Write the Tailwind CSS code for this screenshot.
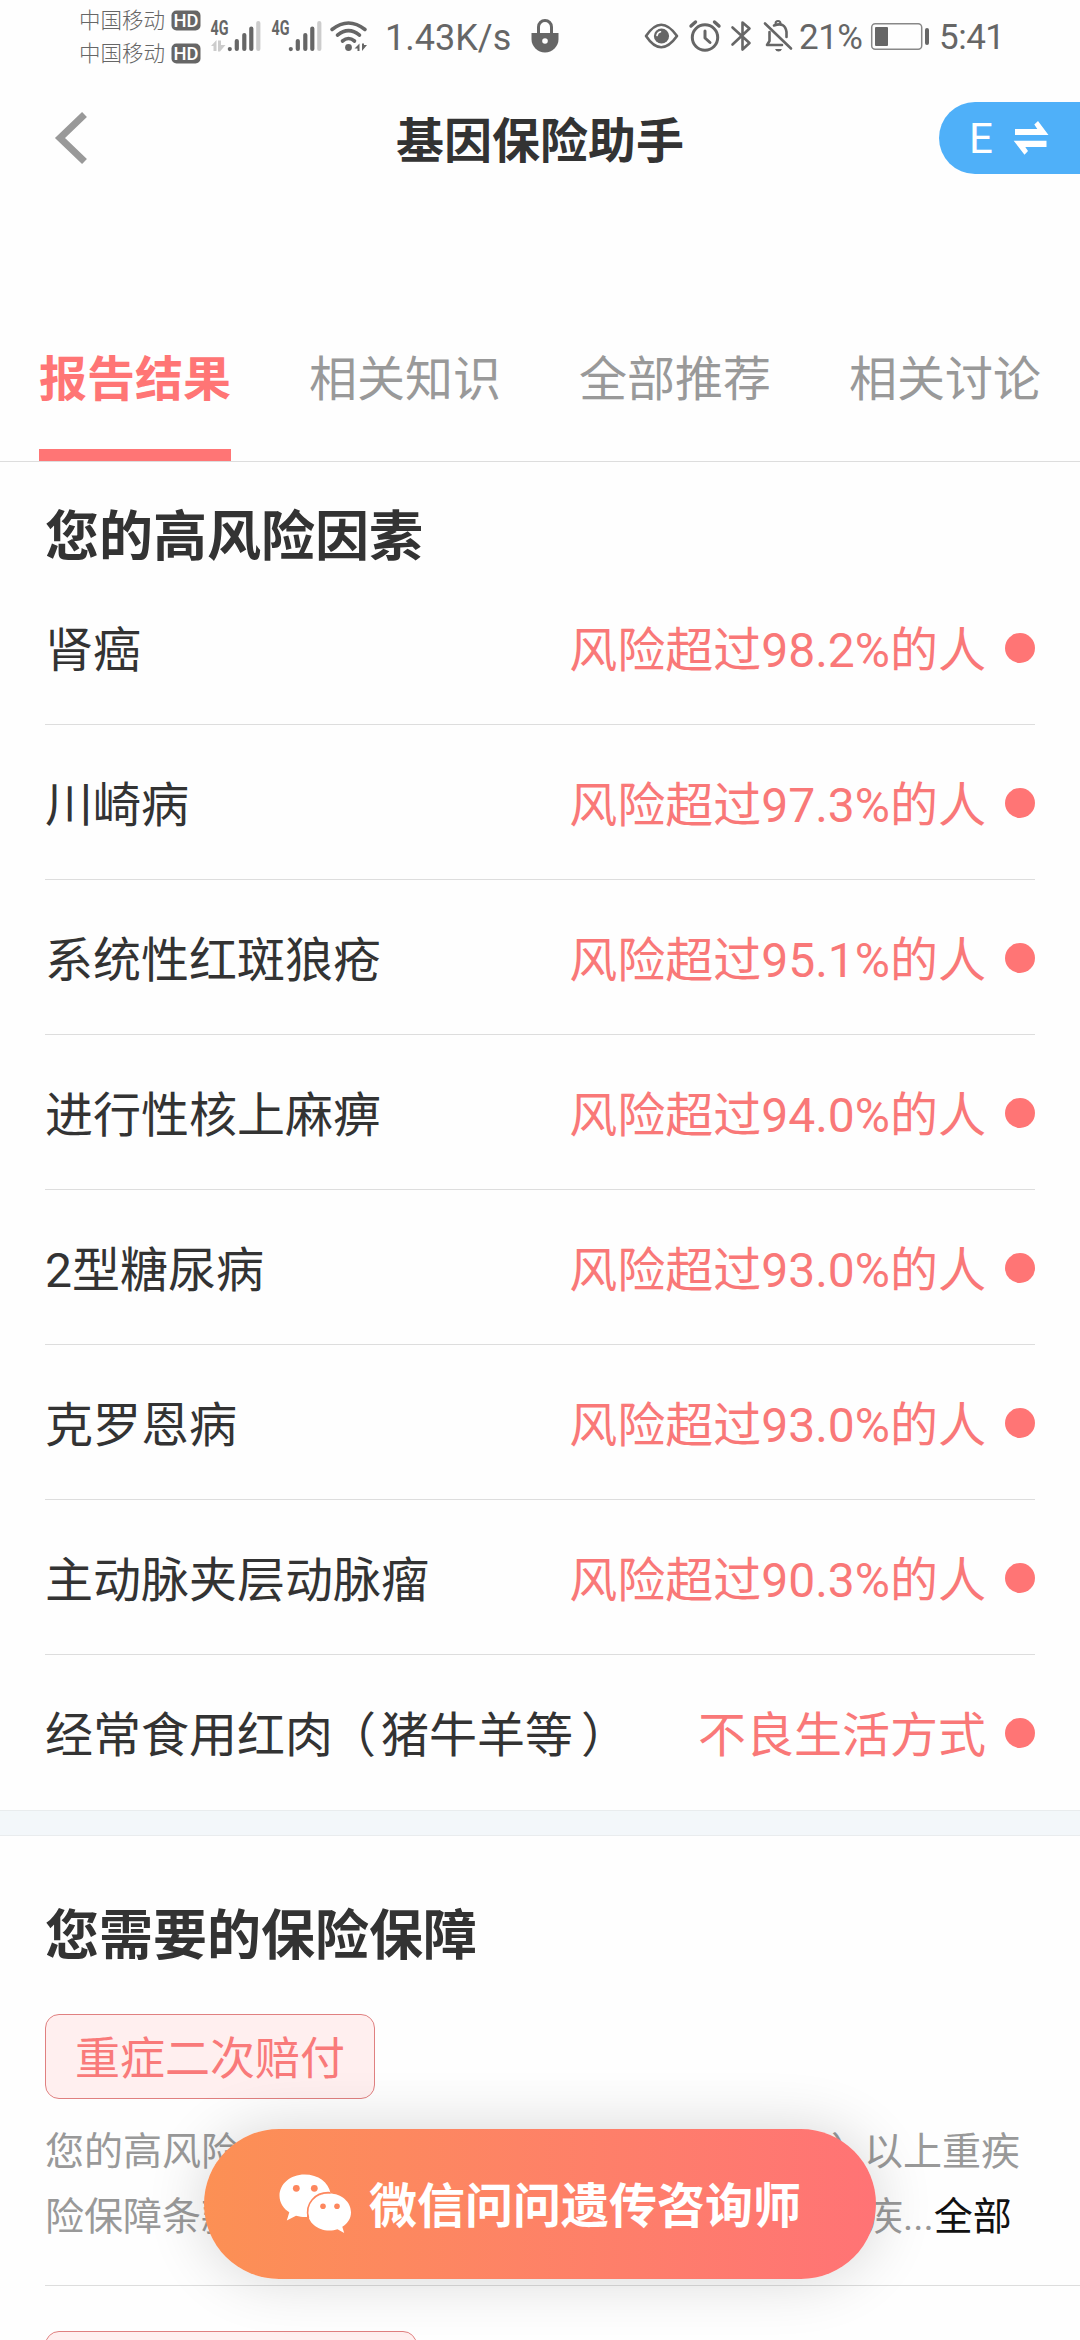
<!DOCTYPE html>
<html lang="zh-CN">
<head>
<meta charset="utf-8">
<title>基因保险助手</title>
<script src="https://cdn.jsdelivr.net/npm/@tailwindcss/browser@4"></script>
</head>
<body class="bg-[#fefefe] text-[#333] font-[Roboto,'Noto_Sans_CJK_SC',sans-serif] w-[1080px] h-[2340px] overflow-hidden">
<div class="relative w-[1080px] h-[2340px] overflow-hidden flex flex-col">

  <!-- status bar -->
  <div class="h-[72px] shrink-0 flex text-[#666] text-[36px] leading-[72px] pl-[79px] whitespace-nowrap">
    <div class="w-[92px] pt-[4px] text-[21.5px] leading-[33px] font-light">
      <div>中国移动</div><div>中国移动</div>
    </div>
    <svg class="w-[208px] h-[72px] shrink-0" viewBox="171 0 208 72" fill="#666">
      <rect x="171.500" y="10.500" width="29" height="20" rx="5"/>
      <rect x="171.500" y="43.500" width="29" height="20" rx="5"/>
      <g font-family="Roboto" font-weight="500" font-size="19" fill="#fff">
        <text x="173.500" y="27.300" textLength="25" lengthAdjust="spacingAndGlyphs">HD</text>
        <text x="173.500" y="60.300" textLength="25" lengthAdjust="spacingAndGlyphs">HD</text>
      </g>
      <g font-family="Roboto" font-weight="700" font-size="19.500">
        <text x="210.500" y="34.700" textLength="18" lengthAdjust="spacingAndGlyphs">4G</text>
        <text x="271.500" y="34.700" textLength="18" lengthAdjust="spacingAndGlyphs">4G</text>
      </g>
      <path d="M211 46l5.500-6v11h-3v-5zM225.500 45l-5.500 6.500h-2V40.500h3V45z" fill="#ccc"/>
      <g stroke="#666" stroke-width="4.200" stroke-linecap="round">
        <path d="M229.800 49v.1M236.800 49V41M244.300 49V35M251.300 49V28.500M290.800 49v.1M297.800 49V41M305.300 49V35M312.300 49V28.500"/>
        <path d="M258.300 49V23M319.300 49V23" stroke="#ccc"/>
      </g>
      <g fill="none" stroke="#666" stroke-width="3.600" stroke-linecap="round">
        <path d="M332 29.500Q348.500 16.500 365 29.500M337.500 35.200Q348.500 26 359.500 35.200M342.500 41Q348.500 36 354.500 41"/>
      </g>
      <circle cx="348.500" cy="47.500" r="3.400"/>
      <path d="M354.500 48.500l5-5v7.500h-2v-2.500zM367 45l-5 6v-7.500h2v1.500z"/>
    </svg>
    <div class="w-[141px] pl-[6px] pt-[2px]">1.43K/s</div>
    <svg class="w-[278px] h-[72px] shrink-0" viewBox="520 0 278 72" fill="none" stroke="#666" stroke-width="3" stroke-linecap="round" stroke-linejoin="round">
      <path d="M538.500 34V27a6.500 6.500 0 0 1 13 0v7"/>
      <path d="M531.500 33h27v6a13.500 13.500 0 0 1-27 0z" fill="#666" stroke="none"/>
      <circle cx="545" cy="41" r="2.800" fill="#fefefe" stroke="none"/>
      <path d="M646 36Q661 13.500 677 36Q661 58.500 646 36z" stroke-width="2.600"/>
      <circle cx="661.500" cy="36" r="7.600" fill="#666" stroke="none"/>
      <path d="M657 35.500Q657.500 32.500 660.500 31.800" stroke="#fefefe" stroke-width="1.600"/>
      <circle cx="705" cy="37.500" r="12.700"/>
      <path d="M705 31v7l5 4.500"/>
      <path d="M691 26l4.500-4M719 26l-4.500-4" stroke-width="3.400"/>
      <path d="M732.500 27.500L749.500 43L742.500 49.500V22.500L749.500 28.500L732.500 44.500" stroke-width="2.600"/>
      <path d="M765 23.500L791 48.500" stroke-width="2.600"/>
      <path d="M769.500 32V41l-2.500 4H782M774 25.500Q785 21.500 786.500 32V37" stroke-width="2.600"/>
      <path d="M775.500 23.500a2.500 2.500 0 0 1 5 0" stroke-width="2"/>
      <path d="M775 49h7q-1 2.500-3.500 2.500T775 49z" fill="#666" stroke="none"/>
    </svg>
    <div class="w-[70px] pt-[2px] pl-px text-[35px]"><span class="inline-block tracking-[-0.5px]">21%</span></div>
    <svg class="w-[70px] h-[72px] shrink-0" viewBox="868 0 70 72">
      <rect x="871.700" y="23.700" width="50" height="25.600" rx="3.500" fill="none" stroke="#888" stroke-width="1.500"/>
      <rect x="875" y="27" width="13" height="19" rx="1" fill="#666"/>
      <rect x="925" y="28" width="4" height="17" rx="2" fill="#666"/>
    </svg>
    <div class="pt-[2px] pl-px text-[35px] tracking-[-0.5px]">5:41</div>
  </div>

  <!-- title bar -->
  <header class="h-[132px] shrink-0 grid grid-cols-[1fr_auto_1fr] items-center">
    <svg class="w-[34px] h-[56px] ml-[54px]" viewBox="0 0 34 56" fill="none" stroke="#999" stroke-width="7"><path d="M30.500 4.500L6 28L30.500 51.500"/></svg>
    <h1 class="text-[48px] leading-[60px] font-bold pt-[7px]">基因保险助手</h1>
    <div class="justify-self-end w-[141px] h-[72px] rounded-l-full bg-[#4fb0f9] flex items-center pl-[30px] gap-[20px] text-white">
      <span class="text-[42px] leading-[72px] pt-[2px]">E</span>
      <svg class="w-[36px] h-[36px]" viewBox="0 0 36 36" fill="#fff"><path d="M2 9H24.300L21.300 4.500L25 1L35.500 15H2zM.7 20.800H33.500V27H12.300L15 31L11.500 34.700z"/></svg>
    </div>
  </header>

  <!-- tabs -->
  <nav class="mt-[96px] h-[162px] shrink-0 grid grid-cols-4 border-b border-[#ddd] text-[48px] leading-[60px] text-[#999] justify-items-center">
    <div class="w-[192px] h-full pt-[50px] border-b-[12px] border-[#ff7575] text-[#ff7575] font-bold">报告结果</div>
    <div class="w-[192px] pt-[50px]">相关知识</div>
    <div class="w-[192px] pt-[50px]">全部推荐</div>
    <div class="w-[192px] pt-[50px]">相关讨论</div>
  </nav>

  <!-- risk factors -->
  <section class="h-[1348px] shrink-0 px-[45px]">
    <h2 class="text-[54px] leading-[70px] font-bold pt-[41px] h-[108px]">您的高风险因素</h2>
    <div id="risks" class="flex flex-col text-[48px]"></div>
  </section>

  <div class="h-[26px] shrink-0 bg-[#f3f7fa] border-y border-[#e9ecee]"></div>

  <!-- coverage -->
  <section class="shrink-0 pl-[45px] pt-[66px]">
    <h2 class="text-[54px] leading-[70px] font-bold">您需要的保险保障</h2>
    <div class="mt-[42px] w-[330px] h-[85px] rounded-[14px] border border-[#e08080] bg-[#ffefef] text-[#f97a7a] text-[45px] leading-[90px] text-center">重症二次赔付</div>
    <div class="mt-[21px] text-[39px] leading-[65px] text-[#999] whitespace-nowrap">
      <div class="flex"><span class="w-[780px]">您的高风险</span><span class="w-[39px] pl-[6px] [font-feature-settings:'halt']">）</span><span>以上重疾</span></div>
      <div class="flex"><span class="w-[819px]">险保障条款</span><span>疾...</span><span class="text-[#111]">全部</span></div>
    </div>
    <div class="mt-[35px] border-t border-[#ddd] pt-[45px]">
      <div class="w-[372px] h-[85px] rounded-[14px] border border-[#e08080] bg-[#ffefef]"></div>
    </div>
  </section>

  <!-- floating consult button -->
  <button class="absolute left-[204px] top-[2129px] w-[672px] h-[150px] rounded-full bg-linear-to-r from-[#fc9054] to-[#ff7375] shadow-[0_0_60px_rgba(0,0,0,0.16)] flex items-center justify-start pl-[75px] gap-[18px] text-white text-[48px] font-bold whitespace-nowrap">
    <svg class="w-[72px] h-[60px]" viewBox="0 0 72 60">
      <path d="M25.500 .5C11.500 .5 .5 10 .5 21.700c0 7 3.900 12.800 9.800 16.600L7.800 46.500l9.200-4.800c4 1 7 1.500 11 1.300C29 30 37 20 51.500 19C49.500 8.500 39.500 .5 25.500 .5z" fill="#fff"/>
      <path d="M50.500 19.500C38 19.500 28.800 27.700 28.800 38S38 56.500 50.500 56.500c3 0 5.500-.4 8-1.200l6.700 3.700-1.900-6.200C68.800 49.500 72 44.500 72 38.300C72 28 62.500 19.500 50.500 19.500z" fill="#fff"/>
      <path d="M29.500 44C25.500 30 36 17.500 51.500 18.700" fill="none" stroke="#fd875e" stroke-width="1.600"/>
      <g fill="#fd875e"><circle cx="17.300" cy="14.300" r="3.400"/><circle cx="35.300" cy="14.300" r="3.400"/><circle cx="44" cy="32.300" r="2.800"/><circle cx="58" cy="32.300" r="2.800"/></g>
    </svg>
    <span class="leading-[60px] pt-[6px]">微信问问遗传咨询师</span>
  </button>
</div>

<script>
  const risks = [
    ['肾癌', '风险超过98.2%的人'],
    ['川崎病', '风险超过97.3%的人'],
    ['系统性红斑狼疮', '风险超过95.1%的人'],
    ['进行性核上麻痹', '风险超过94.0%的人'],
    ['2型糖尿病', '风险超过93.0%的人'],
    ['克罗恩病', '风险超过93.0%的人'],
    ['主动脉夹层动脉瘤', '风险超过90.3%的人'],
    [`经常食用红肉<span class="inline-block w-[48px] pl-[19px] [font-feature-settings:'halt']">（</span>猪牛羊等<span class="inline-block w-[48px] pl-[8px] [font-feature-settings:'halt']">）</span>`, '不良生活方式'],
  ];
  document.getElementById('risks').innerHTML = risks.map(([name, level]) => `
    <div class="h-[155px] pt-[2px] flex items-center border-b border-[#ddd] last:border-transparent whitespace-nowrap">
      <span class="leading-[60px] pt-[5px]">${name}</span>
      <span class="leading-[60px] pt-[5px] ml-auto text-[#f97878]">${level}</span>
      <span class="ml-[19px] w-[30px] h-[30px] rounded-full bg-[#ff7575]"></span>
    </div>`).join('');
</script>
</body>
</html>
